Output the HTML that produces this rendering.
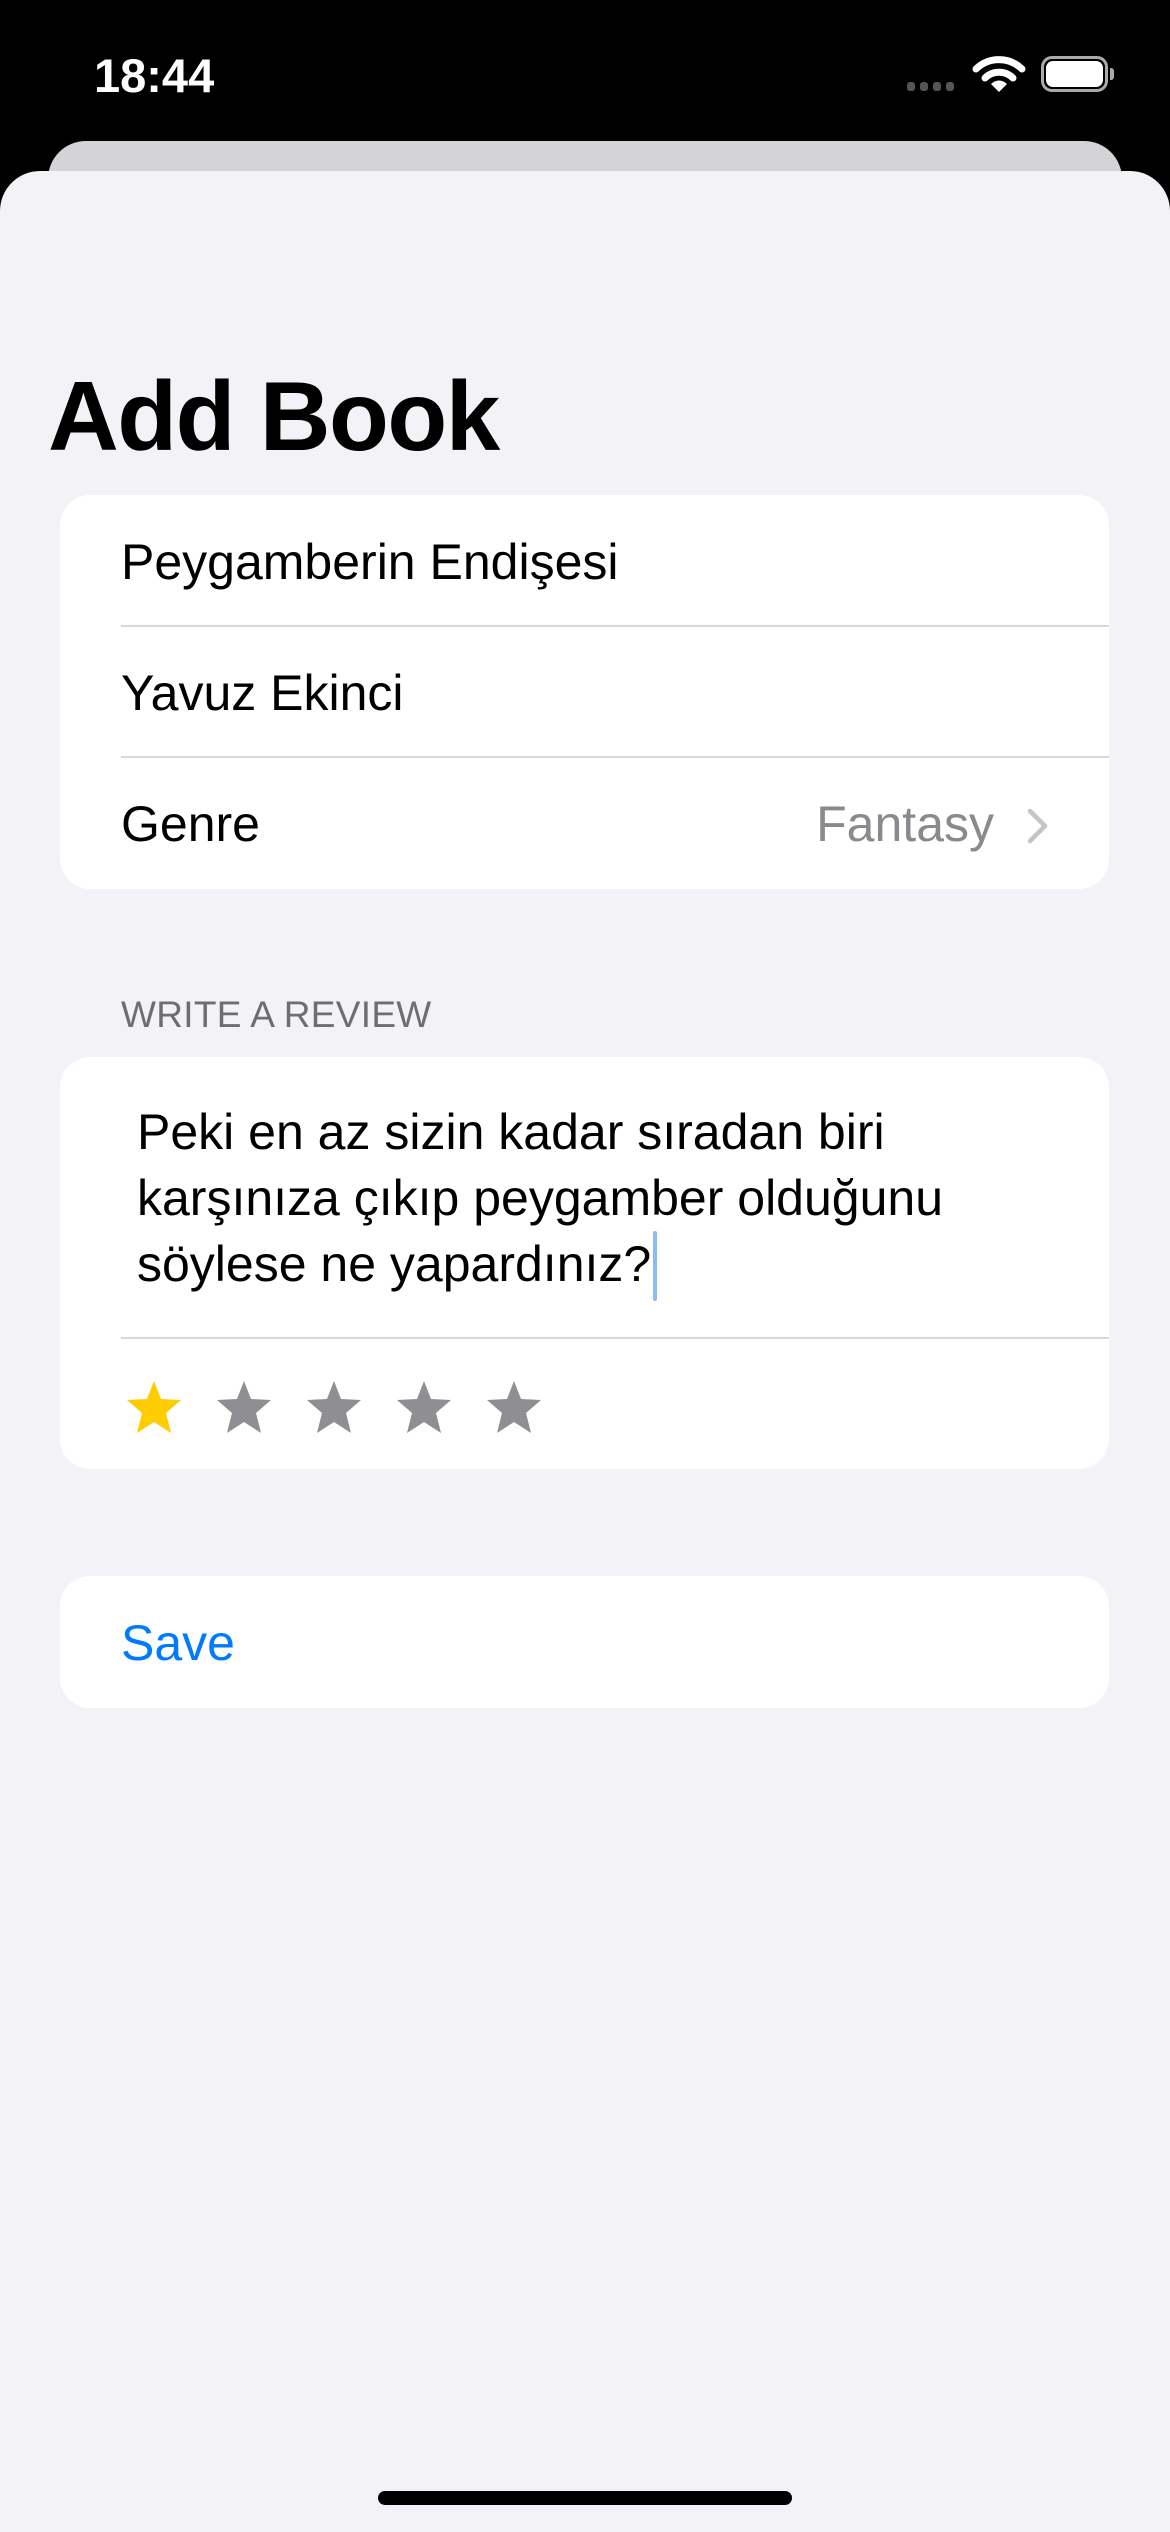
<!DOCTYPE html>
<html><head><meta charset="utf-8"><style>
*{margin:0;padding:0;box-sizing:border-box}
body{width:1170px;height:2532px;background:#000;position:relative;overflow:hidden;font-family:"Liberation Sans",sans-serif}
.abs{position:absolute}
.sheet2{left:48px;top:141px;width:1074px;height:120px;background:#d4d4d8;border-radius:38px 38px 0 0}
.sheet{left:0;top:171px;width:1170px;height:2361px;background:#f2f2f7;border-radius:40px 40px 0 0}
.card{position:absolute;left:60px;width:1049px;background:#fff;border-radius:30px}
.t{position:absolute;font-size:50px;color:#000;white-space:nowrap}
.sep{position:absolute;left:61px;right:0;height:2px;background:#d8d8dc}
.cw{position:relative;display:inline-block;width:0;height:0}
.caret{position:absolute;left:2px;top:-50px;width:4px;height:70px;background:#8cbcf5;border-radius:2px}
</style></head><body>
<div class="abs" style="left:94px;top:48px;font-size:47px;font-weight:bold;color:#fff">18:44</div>
<div class="abs" style="left:907px;top:82px;width:50px;height:9px">
<span class="abs" style="left:0;width:8px;height:9px;background:#555;border-radius:3px"></span>
<span class="abs" style="left:13px;width:8px;height:9px;background:#555;border-radius:3px"></span>
<span class="abs" style="left:26px;width:8px;height:9px;background:#555;border-radius:3px"></span>
<span class="abs" style="left:39px;width:8px;height:9px;background:#555;border-radius:3px"></span>
</div>
<svg class="abs" style="left:972px;top:55px" width="54" height="38" viewBox="0 0 54 38">
<path d="M4 14 A33 33 0 0 1 50 14" stroke="#fff" stroke-width="7" fill="none" stroke-linecap="round"/>
<path d="M13 23 A20 20 0 0 1 41 23" stroke="#fff" stroke-width="7" fill="none" stroke-linecap="round"/>
<path d="M27 37 L19 29 A11 11 0 0 1 35 29 Z" fill="#fff"/>
</svg>
<div class="abs" style="left:1041px;top:56px;width:67px;height:36px;border:3px solid #aaa;border-radius:11px"></div>
<div class="abs" style="left:1046px;top:61px;width:57px;height:26px;background:#fff;border-radius:7px"></div>
<div class="abs" style="left:1110px;top:68px;width:4px;height:12px;background:#aaa;border-radius:0 3px 3px 0"></div>

<div class="abs sheet2"></div>
<div class="abs sheet"></div>
<div class="abs" style="left:48px;top:360px;font-size:98px;font-weight:bold;color:#000;letter-spacing:-1.5px">Add Book</div>

<div class="card" style="top:495px;height:394px">
<div class="t" style="left:61px;top:38px">Peygamberin Endişesi</div>
<div class="sep" style="top:130px"></div>
<div class="t" style="left:61px;top:169px">Yavuz Ekinci</div>
<div class="sep" style="top:261px"></div>
<div class="t" style="left:61px;top:300px">Genre</div>
<div class="t" style="right:115px;top:300px;color:#8a8a8e">Fantasy</div>
<svg class="abs" style="left:966px;top:312px" width="24" height="38" viewBox="0 0 24 38"><path d="M4 4 L19 19 L4 34" stroke="#c4c4c7" stroke-width="4.5" fill="none" stroke-linecap="round" stroke-linejoin="round"/></svg>
</div>

<div class="abs" style="left:121px;top:994px;font-size:37px;color:#6d6d72;letter-spacing:0.3px">WRITE A REVIEW</div>

<div class="card" style="top:1057px;height:412px">
<div class="abs" style="left:77px;top:42px;font-size:50px;line-height:66px;color:#000;white-space:nowrap">Peki en az sizin kadar sıradan biri<br>karşınıza çıkıp peygamber olduğunu<br>söylese ne yapardınız?<span class="cw"><span class="caret"></span></span></div>
<div class="sep" style="top:280px;height:2px"></div>
<svg class="abs" style="left:66px;top:323px" width="420" height="56" viewBox="0 0 420 56">
<defs><path id="s" d="M28 1 L35 19 L55 20 L40 33 L45 53 L28 42 L11 53 L16 33 L1 20 L21 19 Z"/></defs>
<use href="#s" fill="#ffcc00"/>
<use href="#s" x="90" fill="#8e8e93"/>
<use href="#s" x="180" fill="#8e8e93"/>
<use href="#s" x="270" fill="#8e8e93"/>
<use href="#s" x="360" fill="#8e8e93"/>
</svg>
</div>

<div class="card" style="top:1576px;height:132px">
<div class="t" style="left:61px;top:38px;color:#007aff">Save</div>
</div>

<div class="abs" style="left:378px;top:2491px;width:414px;height:14px;background:#000;border-radius:7px"></div>
</body></html>
